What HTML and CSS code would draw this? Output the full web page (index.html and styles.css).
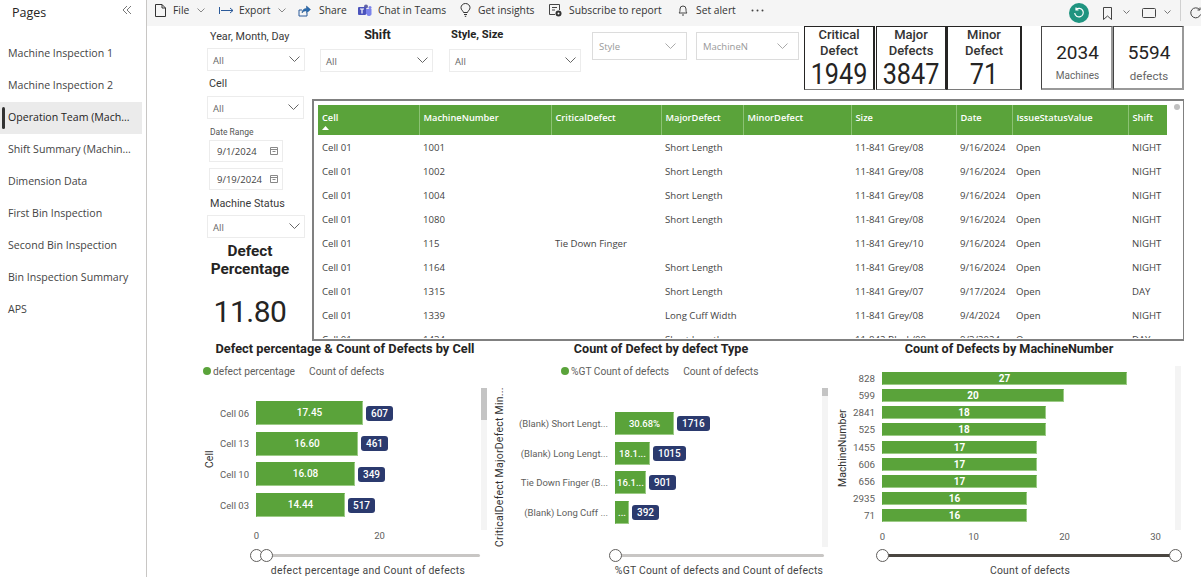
FILE: index.html
```html
<!DOCTYPE html>
<html lang="en">
<head>
<meta charset="utf-8">
<title>Operation Team</title>
<link rel="stylesheet" href="styles.css">
</head>
<body>
<div class="app">
  <aside class="sidebar">
    <div class="pages-head"><span class="pages-title">Pages</span><svg class="collapse" width="10" height="10" viewBox="0 0 10 10"><path d="M5 1 1 5l4 4M9 1 5 5l4 4" fill="none" stroke="#777" stroke-width="1"/></svg></div>
    <nav class="page-list">
      <div class="page-item">Machine Inspection 1</div>
      <div class="page-item">Machine Inspection 2</div>
      <div class="page-item active">Operation Team (Mach...</div>
      <div class="page-item">Shift Summary (Machin...</div>
      <div class="page-item">Dimension Data</div>
      <div class="page-item">First Bin Inspection</div>
      <div class="page-item">Second Bin Inspection</div>
      <div class="page-item">Bin Inspection Summary</div>
      <div class="page-item">APS</div>
    </nav>
  </aside>
  <main class="main">
    <header class="toolbar">
      <div class="tool tool-file"><svg width="11" height="13" viewBox="0 0 11 13"><path d="M.5.5h6.5l3.500 3.500v8.500H.5zM7 .5V4h3.500" fill="none" stroke="#333"/></svg><span class="tool-label">File</span><svg class="chev" width="8" height="5" viewBox="0 0 8 5"><path d="m.5.500 3.500 3.500L7.500.5" fill="none" stroke="#888"/></svg></div>
      <div class="tool tool-export"><svg width="15" height="9" viewBox="0 0 15 9"><path d="M.5 1v7M2 4.500h12M11 2l3 2.500L11 7" fill="none" stroke="#2b5a9a"/></svg><span class="tool-label">Export</span><svg class="chev" width="8" height="5" viewBox="0 0 8 5"><path d="m.5.500 3.500 3.500L7.500.5" fill="none" stroke="#888"/></svg></div>
      <div class="tool tool-share"><svg width="13" height="13" viewBox="0 0 13 13"><path d="M1 12V6h3M1 12h8V9" fill="none" stroke="#2b5a9a"/><path d="M4 9c0-3 2-4.500 4.500-4.500V2L12.500 5.500 8.500 9V6.800C6.500 6.800 5 7.500 4 9z" fill="#2b6cb0" stroke="#1d4f86" stroke-width=".5"/></svg><span class="tool-label">Share</span></div>
      <div class="tool tool-teams"><svg width="14" height="13" viewBox="0 0 14 13"><circle cx="8" cy="2.500" r="2" fill="#6264a7"/><circle cx="12" cy="3.500" r="1.500" fill="#7b83eb"/><path d="M6 5h7.500v4a2.500 2.500 0 0 1-5 1H6z" fill="#7b83eb"/><rect y="3" width="8" height="8" rx="1" fill="#4b53bc"/><path d="M2 5h4M4 5v4.500" stroke="#fff" stroke-width="1.200"/></svg><span class="tool-label">Chat in Teams</span></div>
      <div class="tool tool-insight"><svg width="11" height="14" viewBox="0 0 11 14"><path d="M3.500 9.500C3 7.500 1 7 1 4.700a4.500 4.200 0 0 1 9 0C10 7 8 7.500 7.500 9.500zM4 11.500h3M4.800 13.300h1.400" fill="none" stroke="#333"/></svg><span class="tool-label">Get insights</span></div>
      <div class="tool tool-subscribe"><svg width="13" height="13" viewBox="0 0 13 13"><path d="M6 10.500H.5V.5h10V6M3 3.500h5M3 6h3" fill="none" stroke="#444"/><circle cx="9.500" cy="9.500" r="3" fill="#333"/><circle cx="9.500" cy="9.500" r="1" fill="#fff"/></svg><span class="tool-label">Subscribe to report</span></div>
      <div class="tool tool-alert"><svg width="10" height="11" viewBox="0 0 10 11"><path d="M1 8c1-1 1-2 1-4a3 3 0 0 1 6 0c0 2 0 3 1 4zM4 10h2" fill="none" stroke="#444"/></svg><span class="tool-label">Set alert</span></div>
      <div class="tool tool-more"><svg width="13" height="3" viewBox="0 0 13 3"><circle cx="1.500" cy="1.500" r="1" fill="#444"/><circle cx="6.500" cy="1.500" r="1" fill="#444"/><circle cx="11.500" cy="1.500" r="1" fill="#444"/></svg></div>
      <div class="tool-right">
        <span class="teal-btn"><svg width="12" height="12" viewBox="0 0 12 12"><path d="M3 2.500a4.300 4.300 0 1 1-1.300 3.500M3 .5v2.500h2.500" fill="none" stroke="#fff" stroke-width="1.200"/></svg></span>
        <svg class="bm" width="9" height="13" viewBox="0 0 9 13"><path d="M.5.500h8v12L4.500 9l-4 3.500z" fill="none" stroke="#444"/></svg>
        <svg class="chev chev-a" width="7" height="4" viewBox="0 0 7 4"><path d="m.5.500 3 3 3-3" fill="none" stroke="#777"/></svg>
        <svg class="view" width="14" height="10" viewBox="0 0 14 10"><rect x=".5" y=".5" width="13" height="9" rx="1" fill="none" stroke="#444"/></svg>
        <svg class="chev chev-b" width="7" height="4" viewBox="0 0 7 4"><path d="m.5.500 3 3 3-3" fill="none" stroke="#777"/></svg>
        <span class="tool-div"></span>
        <svg class="refresh" width="12" height="12" viewBox="0 0 12 12"><path d="M10.500 7.500A5 5 0 1 1 9.500 2.500M10 .5v2.500H7.500" fill="none" stroke="#444"/></svg>
      </div>
    </header>
    <section class="canvas">
      <div class="upper">
        <div class="filters">
          <div class="flabel flabel-ymd">Year, Month, Day</div>
          <div class="select sel-ymd"><span>All</span><svg width="11" height="6" viewBox="0 0 11 6"><path d="m.5.500 5 5 5-5" fill="none" stroke="#666"/></svg></div>
          <div class="flabel flabel-cell">Cell</div>
          <div class="select sel-cell"><span>All</span><svg width="11" height="6" viewBox="0 0 11 6"><path d="m.5.500 5 5 5-5" fill="none" stroke="#666"/></svg></div>
          <div class="flabel-date">Date Range</div>
          <div class="date date-a"><span>9/1/2024</span><svg width="8" height="8" viewBox="0 0 8 8"><path d="M.5.500h7v7h-7zM.5 2.500h7M2.500 4.500h3" fill="none" stroke="#888"/></svg></div>
          <div class="date date-b"><span>9/19/2024</span><svg width="8" height="8" viewBox="0 0 8 8"><path d="M.5.500h7v7h-7zM.5 2.500h7M2.500 4.500h3" fill="none" stroke="#888"/></svg></div>
          <div class="flabel flabel-status">Machine Status</div>
          <div class="select sel-status"><span>All</span><svg width="11" height="6" viewBox="0 0 11 6"><path d="m.5.500 5 5 5-5" fill="none" stroke="#666"/></svg></div>
          <div class="kpi-title">Defect<br>Percentage</div>
          <div class="kpi-value">11.80</div>
        </div>
        <div class="right-col">
          <div class="top-row">
            <div class="slicer slicer-shift"><div class="slicer-title center">Shift</div><div class="select"><span>All</span><svg width="11" height="6" viewBox="0 0 11 6"><path d="m.5.500 5 5 5-5" fill="none" stroke="#666"/></svg></div></div>
            <div class="slicer slicer-style"><div class="slicer-title">Style, Size</div><div class="select"><span>All</span><svg width="11" height="6" viewBox="0 0 11 6"><path d="m.5.500 5 5 5-5" fill="none" stroke="#666"/></svg></div></div>
            <div class="muted muted-style"><span>Style</span><svg width="11" height="6" viewBox="0 0 11 6"><path d="m.5.500 5 5 5-5" fill="none" stroke="#aaa"/></svg></div>
            <div class="muted muted-machine"><span>MachineN</span><svg width="11" height="6" viewBox="0 0 11 6"><path d="m.5.500 5 5 5-5" fill="none" stroke="#aaa"/></svg></div>
            <div class="card card-a"><div class="card-head">Critical<br>Defect</div><div class="card-num">1949</div></div>
            <div class="card card-b"><div class="card-head">Major<br>Defects</div><div class="card-num">3847</div></div>
            <div class="card card-c"><div class="card-head">Minor<br>Defect</div><div class="card-num">71</div></div>
            <div class="stat stat-a"><div class="stat-num">2034</div><div class="stat-label">Machines</div></div>
            <div class="stat stat-b"><div class="stat-num">5594</div><div class="stat-label">defects</div></div>
          </div>
          <div class="table-box">
            <span class="scroll-dot"></span>
            <div class="table-clip">
              <table class="grid">
                <colgroup><col class="c1"><col class="c2"><col class="c3"><col class="c4"><col class="c5"><col class="c6"><col class="c7"><col class="c8"><col class="c9"></colgroup>
                <thead><tr><th class="sorted">Cell<svg class="sort" width="7" height="4" viewBox="0 0 7 4"><path d="M3.500 0 7 4H0z" fill="#fff"/></svg></th><th>MachineNumber</th><th>CriticalDefect</th><th>MajorDefect</th><th>MinorDefect</th><th>Size</th><th>Date</th><th>IssueStatusValue</th><th>Shift</th></tr></thead>
                <tbody>
                  <tr><td>Cell 01</td><td>1001</td><td></td><td>Short Length</td><td></td><td>11-841 Grey/08</td><td>9/16/2024</td><td>Open</td><td>NIGHT</td></tr>
                  <tr><td>Cell 01</td><td>1002</td><td></td><td>Short Length</td><td></td><td>11-841 Grey/08</td><td>9/16/2024</td><td>Open</td><td>NIGHT</td></tr>
                  <tr><td>Cell 01</td><td>1004</td><td></td><td>Short Length</td><td></td><td>11-841 Grey/08</td><td>9/16/2024</td><td>Open</td><td>NIGHT</td></tr>
                  <tr><td>Cell 01</td><td>1080</td><td></td><td>Short Length</td><td></td><td>11-841 Grey/08</td><td>9/16/2024</td><td>Open</td><td>NIGHT</td></tr>
                  <tr><td>Cell 01</td><td>115</td><td>Tie Down Finger</td><td></td><td></td><td>11-841 Grey/10</td><td>9/16/2024</td><td>Open</td><td>NIGHT</td></tr>
                  <tr><td>Cell 01</td><td>1164</td><td></td><td>Short Length</td><td></td><td>11-841 Grey/08</td><td>9/16/2024</td><td>Open</td><td>NIGHT</td></tr>
                  <tr><td>Cell 01</td><td>1315</td><td></td><td>Short Length</td><td></td><td>11-841 Grey/07</td><td>9/17/2024</td><td>Open</td><td>DAY</td></tr>
                  <tr><td>Cell 01</td><td>1339</td><td></td><td>Long Cuff Width</td><td></td><td>11-841 Grey/08</td><td>9/4/2024</td><td>Open</td><td>NIGHT</td></tr>
                  <tr><td>Cell 01</td><td>1434</td><td></td><td>Short Length</td><td></td><td>11-842 Black/08</td><td>9/3/2024</td><td>Open</td><td>DAY</td></tr>
                </tbody>
              </table>
            </div>
          </div>
        </div>
      </div>
      <div class="charts">
        <article class="chart chart-1">
          <h2 class="chart-title">Defect percentage &amp; Count of Defects by Cell</h2>
          <div class="legend"><i class="dot"></i><span>defect percentage</span><span class="legend-2">Count of defects</span></div>
          <div class="plot">
            <div class="axis-title">Cell</div>
            <div class="plot-body">
              <div class="row"><span class="cat">Cell 06</span><span class="bar" style="width:107px">17.45</span><span class="badge">607</span></div>
              <div class="row"><span class="cat">Cell 13</span><span class="bar" style="width:102px">16.60</span><span class="badge">461</span></div>
              <div class="row"><span class="cat">Cell 10</span><span class="bar" style="width:99px">16.08</span><span class="badge">349</span></div>
              <div class="row"><span class="cat">Cell 03</span><span class="bar" style="width:89px">14.44</span><span class="badge">517</span></div>
            </div>
            <div class="vscroll"><span class="thumb"></span></div>
          </div>
          <div class="ticks"><span>0</span><span>20</span></div>
          <div class="slider"><i class="knob"></i><i class="knob knob-2"></i></div>
          <div class="x-title">defect percentage and Count of defects</div>
        </article>
        <article class="chart chart-2">
          <h2 class="chart-title">Count of Defect by defect Type</h2>
          <div class="legend"><i class="dot"></i><span>%GT Count of defects</span><span class="legend-2">Count of defects</span></div>
          <div class="plot">
            <div class="axis-title">CriticalDefect MajorDefect Min...</div>
            <div class="plot-body">
              <div class="row"><span class="cat">(Blank) Short Lengt...</span><span class="bar" style="width:59px">30.68%</span><span class="badge">1716</span></div>
              <div class="row"><span class="cat">(Blank) Long Lengt...</span><span class="bar" style="width:35px">18.1...</span><span class="badge">1015</span></div>
              <div class="row"><span class="cat">Tie Down Finger (B...</span><span class="bar" style="width:31px">16.1...</span><span class="badge">901</span></div>
              <div class="row"><span class="cat">(Blank) Long Cuff ...</span><span class="bar" style="width:14px">...</span><span class="badge">392</span></div>
            </div>
            <div class="vscroll"><span class="thumb"></span></div>
          </div>
          <div class="slider"><i class="knob"></i></div>
          <div class="x-title">%GT Count of defects and Count of defects</div>
        </article>
        <article class="chart chart-3">
          <h2 class="chart-title">Count of Defects by MachineNumber</h2>
          <div class="plot">
            <div class="axis-title">MachineNumber</div>
            <div class="plot-body">
              <div class="row"><span class="cat">828</span><span class="bar" style="width:245px">27</span></div>
              <div class="row"><span class="cat">599</span><span class="bar" style="width:182px">20</span></div>
              <div class="row"><span class="cat">2841</span><span class="bar" style="width:164px">18</span></div>
              <div class="row"><span class="cat">525</span><span class="bar" style="width:164px">18</span></div>
              <div class="row"><span class="cat">1455</span><span class="bar" style="width:155px">17</span></div>
              <div class="row"><span class="cat">606</span><span class="bar" style="width:155px">17</span></div>
              <div class="row"><span class="cat">656</span><span class="bar" style="width:155px">17</span></div>
              <div class="row"><span class="cat">2935</span><span class="bar" style="width:145px">16</span></div>
              <div class="row"><span class="cat">71</span><span class="bar" style="width:145px">16</span></div>
            </div>
            <div class="vscroll"></div>
          </div>
          <div class="ticks"><span>0</span><span>10</span><span>20</span><span>30</span></div>
          <div class="slider"><i class="knob"></i><i class="knob knob-end"></i></div>
          <div class="x-title">Count of defects</div>
        </article>
      </div>
    </section>
  </main>
</div>
</body>
</html>
```
FILE: styles.css
```css
* { box-sizing: border-box; }
html, body { margin: 0; height: 577px; overflow: hidden; background: #fff; }
body { font-family: "Open Sans", "Noto Sans", sans-serif; color: #333; }
.app { display: flex; width: 1201px; height: 577px; }

/* sidebar */
.sidebar { width: 147px; flex: none; border-right: 1px solid #c8c6c4; }
.pages-head { display: flex; justify-content: space-between; height: 38px; padding: 4px 14px 0 12px; }
.pages-title { font-size: 12.500px; line-height: 18px; color: #252423; }
.collapse { margin-top: 1px; }
.page-item { height: 32px; width: 142px; line-height: 31px; padding-left: 8px; font-size: 10.600px; color: #444; white-space: nowrap; position: relative; }
.page-item.active { background: #ebebeb; color: #252423; }
.page-item.active::before { content: ""; position: absolute; left: 2px; top: 5px; width: 3px; height: 22px; background: #333; border-radius: 2px; }

/* toolbar */
.main { flex: 1; min-width: 0; display: flex; flex-direction: column; }
.toolbar { height: 26px; flex: none; background: #f5f5f5; display: flex; align-items: center; padding: 0 0 6px 8px; font-size: 10.300px; color: #333; }
.tool { display: flex; align-items: center; white-space: nowrap; }
.tool-label { margin-left: 7px; }
.tool .chev { margin-left: 8px; }
.tool-file { width: 64px; }
.tool-export { width: 79px; }
.tool-export .tool-label { margin-left: 5px; }
.tool-share { width: 60px; }
.tool-share .tool-label { margin-left: 8px; }
.tool-teams { width: 102px; }
.tool-teams .tool-label { margin-left: 6px; }
.tool-insight { width: 89px; }
.tool-subscribe { width: 129px; }
.tool-alert { width: 73px; }
.tool-alert .tool-label { margin-left: 8px; }
.tool-right { margin-left: auto; display: flex; align-items: center; }
.teal-btn { width: 20px; height: 20px; border-radius: 50%; background: #1f9480; display: flex; align-items: center; justify-content: center; margin-right: 14px; margin-top: 6px; }
.bm { margin-right: 11px; margin-top: 6px; }
.chev-a { margin-right: 12px; margin-top: 4px; }
.view { margin-right: 8px; margin-top: 6px; }
.chev-b { margin-right: 9px; margin-top: 4px; }
.tool-div { width: 1px; height: 22px; background: #d0d0d0; margin-right: 9px; }
.refresh { margin-right: -1px; margin-top: 6px; }

/* canvas */
.canvas { flex: 1; min-height: 0; padding-left: 60px; }
.upper { display: flex; height: 315px; }
.filters { width: 98px; margin-right: 7px; flex: none; font-family: Roboto, sans-serif; }
.flabel { font-size: 10.800px; line-height: 14px; color: #3a3a3a; white-space: nowrap; padding-left: 3px; }
.flabel-ymd { margin-top: 4px; }
.flabel-cell { margin-top: 6px; padding-left: 2px; }
.flabel-status { margin-top: 7px; padding-left: 3px; }
.flabel-date { font-size: 8.500px; line-height: 10px; margin-top: 8px; padding-left: 3px; color: #555; }
.select { height: 23px; border: 1px solid #ececec; display: flex; align-items: center; justify-content: space-between; padding: 2px 4px 0 5px; font-size: 9.500px; color: #666; font-family: "Open Sans", sans-serif; }
.select svg { margin-top: -4px; }
.sel-ymd { margin-top: 4px; }
.sel-cell { margin-top: 5px; width: 97px; }
.sel-status { margin-top: 4px; }
.date { width: 74px; height: 22px; margin-left: 2px; border: 1px solid #ececec; display: flex; align-items: center; justify-content: space-between; padding: 0 4px 0 7px; font-size: 9.500px; color: #444; font-family: "Open Sans", sans-serif; }
.date-a { margin-top: 3px; }
.date-b { margin-top: 6px; }
.kpi-title { text-align: center; font-weight: 700; font-size: 15.300px; line-height: 18px; margin-top: 4px; padding-right: 12px; color: #252423; }
.kpi-value { text-align: center; font-size: 30px; line-height: 38px; margin-top: 15px; padding-right: 12px; color: #252423; letter-spacing: -.5px; }

.right-col { width: 872px; flex: none; display: flex; flex-direction: column; }
.top-row { height: 73px; flex: none; display: flex; align-items: flex-start; font-family: Roboto, sans-serif; }
.slicer-title { font-size: 11.200px; font-weight: 700; line-height: 14px; color: #252423; padding-left: 2px; margin-top: 2px; height: 21px; }
.slicer-title.center { text-align: center; font-size: 12.500px; margin-top: 2px; height: 21px; }
.slicer-shift { width: 113px; margin-left: 8px; }
.slicer-style { width: 132px; margin-left: 16px; }
.muted { height: 28px; margin-top: 6px; border: 1px solid #dcdcdc; display: flex; align-items: center; justify-content: space-between; padding: 0 10px 0 6px; font-size: 9.500px; color: #999; font-family: "Open Sans", sans-serif; }
.muted-style { width: 95px; margin-left: 11px; }
.muted-machine { width: 103px; margin-left: 9px; }
.card { height: 64px; border: 1px solid #252423; border-bottom-color: #7a7a7a; border-right-width: 2px; text-align: center; overflow: hidden; color: #252423; }
.card-a { width: 71px; margin-left: 5px; }
.card-b { width: 71px; margin-left: 1px; }
.card-c { width: 75px; }
.card-head { font-size: 13px; font-weight: 500; line-height: 16px; color: #333; }
.card-num { font-size: 29px; line-height: 31px; transform: scaleX(.87); }
.stat { height: 64px; border: 1px solid #444; border-right: 2px solid #999; border-bottom: 2px solid #999; text-align: center; padding: 15px 0 0 2px; }
.stat-a { width: 72px; margin-left: 19px; }
.stat-b { width: 71px; }
.stat-num { font-size: 19px; line-height: 22px; color: #252423; }
.stat-label { font-size: 10px; line-height: 14px; margin-top: 5px; color: #666; }
.stat-b .stat-label { font-size: 11.500px; }

.table-box { position: relative; width: 872px; height: 242px; border: 2px solid #808080; border-right-width: 1px; padding: 4px 0 0 4px; background: #fff; }
.table-clip { height: 233px; overflow: hidden; }
.scroll-dot { position: absolute; right: 3px; top: 3px; width: 6px; height: 6px; border-radius: 50%; background: #c0c0c0; }
.grid { border-collapse: collapse; table-layout: fixed; width: 849px; font-size: 9.600px; }
.c1 { width: 101px; } .c2 { width: 132px; } .c3 { width: 110px; } .c4 { width: 82px; } .c5 { width: 108px; } .c6 { width: 105px; } .c7 { width: 56px; } .c8 { width: 116px; } .c9 { width: 39px; }
.grid th { height: 30px; background: #5aa33a; color: #fff; text-align: left; font-weight: 600; font-size: 9.250px; padding: 0 4px 6px; border-left: 1px solid #8cc274; white-space: nowrap; position: relative; }
.grid th:first-child { border-left: 0; }
.grid td { height: 23.900px; padding: 2px 4px 0; white-space: nowrap; color: #444; }
.sort { position: absolute; left: 4px; bottom: 5px; }

/* charts */
.charts { display: flex; height: 236px; font-family: Roboto, sans-serif; }
.chart { display: flex; flex-direction: column; flex: none; position: relative; }
.chart > * { flex: none; }
.chart-1 { width: 288px; }
.chart-2 { width: 341px; }
.chart-3 { width: 348px; }
.chart-title { margin: 0; font-size: 12.600px; font-weight: 700; line-height: 16px; text-align: center; color: #252423; white-space: nowrap; }
.chart-1 .chart-title { margin-left: -12px; font-size: 12.800px; }
.chart-2 .chart-title { padding-right: 9px; }
.chart-3 .chart-title { margin-left: -2px; }
.legend { display: flex; align-items: center; font-size: 10.200px; color: #605e5c; height: 14px; margin-top: 7px; white-space: nowrap; }
.dot { width: 8px; height: 8px; border-radius: 50%; background: #5aa33a; margin-right: 2px; }
.legend-2 { margin-left: 14px; }
.chart-1 .legend { margin-left: -4px; }
.chart-2 .legend { margin-left: 66px; }
.plot { display: flex; position: relative; }
.chart-1 .plot { height: 142px; margin-top: 10px; }
.chart-2 .plot { height: 159px; margin-top: 10px; }
.chart-3 .plot { height: 164px; margin-top: 9px; }
.axis-title { writing-mode: vertical-rl; transform: rotate(180deg); text-align: center; font-size: 10.500px; color: #333; white-space: nowrap; flex: none; }
.chart-1 .axis-title { width: 12px; margin-left: -4px; }
.chart-2 .axis-title { width: 12px; margin-left: -2px; letter-spacing: .25px; }
.chart-3 .axis-title { width: 12px; }
.plot-body { flex: 1; display: flex; flex-direction: column; }
.row { display: flex; align-items: center; }
.cat { flex: none; text-align: right; font-size: 9.500px; color: #605e5c; white-space: nowrap; margin-right: 7px; }
.bar { flex: none; background: #5aa33a; color: #fff; text-align: center; font-weight: 500; font-size: 10px; border: 1px solid #9ccb86; border-left-color: #5aa33a; border-top-color: #5aa33a; overflow: hidden; white-space: nowrap; }
.badge { flex: none; background: #2b3a6e; color: #fff; font-weight: 500; font-size: 10px; line-height: 15px; height: 15px; border-radius: 3px; padding: 0 5px; margin-left: 3px; }
.chart-1 .plot-body { padding-top: 13px; gap: 6.700px; }
.chart-1 .row { height: 24px; }
.chart-1 .cat { width: 34px; }
.chart-1 .bar { height: 24px; line-height: 22px; }
.chart-2 .plot-body { padding-top: 24px; gap: 6.700px; }
.chart-2 .row { height: 23px; }
.chart-2 .cat { width: 103px; }
.chart-2 .bar { height: 23px; line-height: 21px; font-size: 9.500px; }
.chart-3 .plot-body { padding-top: 6px; gap: 4.150px; }
.chart-3 .row { height: 13px; }
.chart-3 .cat { width: 27px; font-size: 9.800px; }
.chart-3 .bar { height: 13px; line-height: 11px; font-weight: 700; }
.vscroll { flex: none; background: #f4f4f4; position: relative; }
.chart-1 .vscroll { width: 6px; margin-right: 8px; }
.chart-2 .vscroll { width: 6px; margin-right: 8px; }
.chart-3 .vscroll { width: 6px; margin-right: 3px; }
.thumb { display: block; width: 100%; background: #c4c4c4; }
.chart-1 .thumb { height: 32px; }
.chart-2 .thumb { height: 8px; }
.ticks { display: grid; grid-auto-flow: column; grid-auto-columns: 91px; justify-content: start; text-align: center; font-size: 9.500px; color: #605e5c; height: 14px; }
.chart-1 .ticks { grid-auto-columns: 123px; margin-left: -12px; }
.chart-3 .ticks { margin-left: 1px; margin-top: 1px; }
.slider { height: 3px; position: relative; border-radius: 2px; background: #c8c6c4; }
.chart-1 .slider { margin: 10px 15px 0 49px; }
.chart-2 .slider { margin: 7px 12px 0 120px; }
.chart-3 .slider { margin: 9px 8px 0 46px; background: #4a4640; }
.knob { position: absolute; width: 13px; height: 13px; border-radius: 50%; background: #fff; border: 1.500px solid #605e5c; top: -5px; left: -6px; }
.knob-2 { left: 4px; }
.knob-end { left: auto; right: -6px; }
.x-title { font-size: 10.400px; color: #444; text-align: center; letter-spacing: .3px; line-height: 14px; margin-top: 7px; white-space: nowrap; }
.chart-1 .x-title { padding-left: 34px; }
.chart-2 .x-title { padding-left: 107px; letter-spacing: .22px; }
.chart-3 .x-title { padding-left: 40px; letter-spacing: .2px; }
```
